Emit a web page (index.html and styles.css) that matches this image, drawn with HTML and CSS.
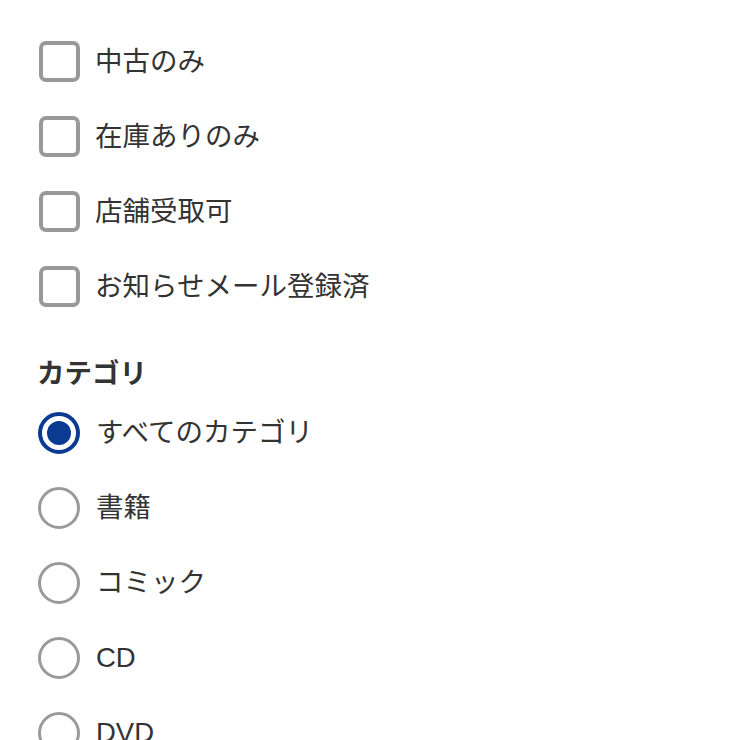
FILE: index.html
```html
<!DOCTYPE html>
<html lang="ja">
<head>
<meta charset="utf-8">
<link rel="stylesheet" href="styles.css">
</head>
<body>
<div class="panel">
  <ul class="options">
    <li class="row"><span class="check"></span><span class="label">中古のみ</span></li>
    <li class="row"><span class="check"></span><span class="label">在庫ありのみ</span></li>
    <li class="row"><span class="check"></span><span class="label">店舗受取可</span></li>
    <li class="row"><span class="check"></span><span class="label">お知らせメール登録済</span></li>
  </ul>
  <h2 class="heading">カテゴリ</h2>
  <ul class="options">
    <li class="row"><span class="radio selected"></span><span class="label">すべてのカテゴリ</span></li>
    <li class="row"><span class="radio"></span><span class="label">書籍</span></li>
    <li class="row"><span class="radio"></span><span class="label">コミック</span></li>
    <li class="row"><span class="radio"></span><span class="label">CD</span></li>
    <li class="row"><span class="radio"></span><span class="label">DVD</span></li>
  </ul>
</div>
</body>
</html>
```
FILE: styles.css
```css
html, body {
  margin: 0;
  padding: 0;
  background: #ffffff;
}
body {
  font-family: "Liberation Sans", "Noto Sans CJK JP", sans-serif;
  color: #333333;
  overflow: hidden;
}
.panel {
  padding: 24px 0 0 38px;
}
.options {
  list-style: none;
  margin: 0;
  padding: 0;
}
.row {
  display: flex;
  align-items: center;
  height: 75px;
  gap: 16px;
}
.check {
  box-sizing: border-box;
  width: 41px;
  height: 41px;
  margin-left: 1px;
  margin-right: -1px;
  border: 4px solid #999999;
  border-radius: 7px;
  flex: none;
}
.radio {
  box-sizing: border-box;
  width: 42px;
  height: 42px;
  border: 3.5px solid #9a9a9a;
  border-radius: 50%;
  flex: none;
  display: flex;
  align-items: center;
  justify-content: center;
}
.radio.selected {
  border: 4px solid #0b3a92;
}
.radio.selected::after {
  content: "";
  width: 24px;
  height: 24px;
  border-radius: 50%;
  background: #0b3a92;
}
.label {
  font-size: 27.5px;
  line-height: 1;
  color: #333333;
}
.heading {
  margin: 36px 0 7.5px -1px;
  font-size: 27.5px;
  line-height: 28px;
  height: 28px;
  font-weight: 700;
  color: #333333;
}
```
